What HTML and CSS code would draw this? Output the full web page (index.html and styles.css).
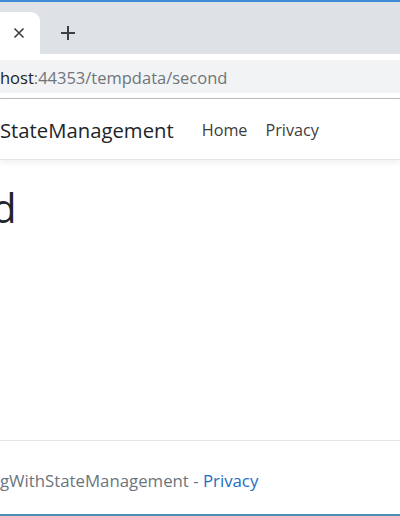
FILE: index.html
```html
<!DOCTYPE html>
<html>
<head>
<meta charset="utf-8">
<link rel="stylesheet" href="styles.css">
</head>
<body>
<div class="window">
  <div class="tabstrip">
    <div class="tab">
      <svg class="tab-close" width="12" height="12" viewBox="0 0 12 12"><path d="M1.5 1.5 L10.5 10.5 M10.5 1.5 L1.5 10.5" stroke="#3c4043" stroke-width="1.6" fill="none"/></svg>
    </div>
    <svg class="newtab" width="16" height="16" viewBox="0 0 16 16"><path d="M8 1 V15 M1 8 H15" stroke="#3c4043" stroke-width="2" fill="none"/></svg>
  </div>
  <div class="toolbar">
    <div class="omnibox"><span class="url-host">host</span><span class="url-rest">:44353/tempdata/second</span></div>
  </div>
  <header class="navbar">
    <span class="brand">StateManagement</span>
    <nav class="links"><a class="nav-link">Home</a><a class="nav-link">Privacy</a></nav>
  </header>
  <main class="main">
    <h1 class="title">d</h1>
  </main>
  <footer class="footer">
    <span class="foot-text">gWithStateManagement - <a class="foot-link">Privacy</a></span>
  </footer>
</div>
</body>
</html>
```
FILE: styles.css
```css
html, body {
  margin: 0;
  padding: 0;
  width: 400px;
  height: 516px;
  overflow: hidden;
  background: #ffffff;
  font-family: "Open Sans", "Noto Sans", sans-serif;
}
.window {
  width: 400px;
  height: 516px;
  display: flex;
  flex-direction: column;
  border-top: 2px solid #3f8ad6;
  border-bottom: 2px solid #4a8fb5;
  box-sizing: border-box;
  overflow: hidden;
}
.tabstrip {
  height: 52px;
  background: #dee1e6;
  display: flex;
  align-items: flex-end;
  flex-shrink: 0;
}
.tab {
  height: 42px;
  width: 40px;
  background: #ffffff;
  border-top-right-radius: 9px;
  display: flex;
  align-items: center;
  padding-left: 13px;
  box-sizing: border-box;
  flex-shrink: 0;
}
.tab-close { flex-shrink: 0; }
.newtab { margin-left: 20px; margin-bottom: 13px; }
.toolbar {
  height: 45px;
  background: #ffffff;
  border-bottom: 1px solid #bdbdbd;
  display: flex;
  align-items: center;
  flex-shrink: 0;
  box-sizing: border-box;
}
.omnibox {
  flex: 1;
  height: 33px;
  background: #f1f3f4;
  display: flex;
  align-items: center;
  font-size: 16.5px;
  white-space: nowrap;
  padding-top: 2px;
  box-sizing: border-box;
}
.url-host { color: #202124; }
.url-rest { color: #70757a; }
.navbar {
  height: 61px;
  flex-shrink: 0;
  display: flex;
  align-items: center;
  border-bottom: 1px solid #e5e5e5;
  box-shadow: 0 3px 6px rgba(0,0,0,0.06);
  box-sizing: border-box;
  white-space: nowrap;
  padding-top: 2px;
}
.brand {
  font-size: 20.3px;
  color: #212529;
}
.links {
  display: flex;
  gap: 18px;
  margin-left: 28px;
}
.nav-link {
  font-size: 16.2px;
  color: #3d3d3d;
}
.main {
  flex: 1;
  white-space: nowrap;
}
.title {
  margin: 24px 0 0 -8px;
  font-size: 40px;
  font-weight: 400;
  color: #212529;
  line-height: 1.2;
}
.footer {
  height: 74px;
  flex-shrink: 0;
  border-top: 1px solid #e5e5e5;
  display: flex;
  align-items: center;
  white-space: nowrap;
  box-sizing: border-box;
  padding-top: 6px;
}
.foot-text {
  font-size: 16.8px;
  color: #6c757d;
}
.foot-link { color: #1b6ec2; }
```
